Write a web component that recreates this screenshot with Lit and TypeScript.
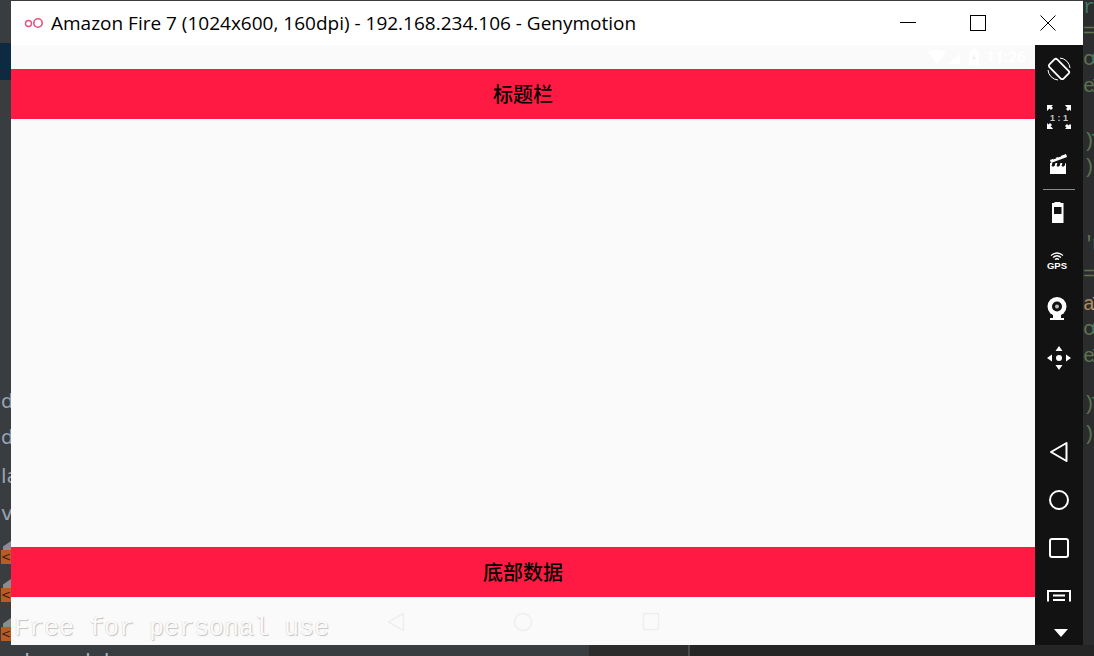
import { LitElement, html, css, svg } from "lit";
import { customElement } from "lit/decorators.js";

const rightCode: [number, string, string, string?, string?][] = [
  [8, " ", "r"], [32, "=", "'"], [60, "c", "0"], [87, "e", "I"], [142, ")", "T"], [168, ")", "'"],
  [245, "'", "r"], [275, "=", "'"], [305, "a", "I", "#b08a5a", "#9aa8c8"], [330, "c", "0"], [357, "e", "I"], [405, ")", "T"], [435, ")", "'"],
];

@customElement("app-root")
export class AppRoot extends LitElement {
  static styles = css`
    :host {
      display: block;
      position: relative;
      width: 1094px;
      height: 656px;
      overflow: hidden;
      background: #3a3d3f;
      font-family: "Liberation Sans", "Noto Sans CJK SC", sans-serif;
    }
    .navy { position: absolute; left: 0; top: 43px; width: 11px; height: 37px; background: #0d2a40; }
    .ide-letter { position: absolute; left: 1px; font: 20px/24px "DejaVu Sans", sans-serif; color: #a9b7c6; opacity: .85; }
    .marker { position: absolute; left: 1px; width: 10px; height: 14px; background: #b85c24; color: #3a2010; font: 12px/14px "DejaVu Sans", sans-serif; }
    .marker-top { position: absolute; left: 3px; width: 8px; height: 9px; background: #8a8d8f; clip-path: polygon(100% 0, 100% 100%, 0 100%, 0 60%); }
    .right-bg { position: absolute; left: 1083px; top: 0; width: 11px; height: 645px; background: #2b2c2d; overflow: hidden; }
    .code { position: absolute; left: 0; font: 20px/24px "Liberation Mono", monospace; letter-spacing: -4px; color: #5f7350; white-space: nowrap; }
    .code b { font-weight: 400; color: #3f7565; }
    .bottom-mid { position: absolute; left: 589px; top: 645px; width: 99px; height: 11px; background: #2c2c2c; }
    .bottom-right { position: absolute; left: 690px; top: 645px; width: 404px; height: 11px; background: #252525; }
    .bottom-rule { position: absolute; left: 688px; top: 645px; width: 2px; height: 11px; background: #4a4a4a; }
    .bottom-text { position: absolute; left: 11px; top: 650px; font: 21px/24px "DejaVu Sans", sans-serif; color: #a9b7c6; white-space: nowrap; }

    .window {
      position: absolute;
      left: 11px;
      top: 1px;
      width: 1072px;
      height: 644px;
      display: flex;
      flex-direction: column;
      background: #fff;
    }
    .titlebar { height: 44px; display: flex; align-items: center; flex: none; background: #fff; }
    .logo { width: 20px; height: 12px; margin-left: 13px; margin-right: 7px; flex: none; }
    .title { flex: 1; font: 19px/24px "Open Sans", "Liberation Sans", sans-serif; color: #000; white-space: nowrap; }
    .winbtn { width: 70px; height: 44px; display: flex; align-items: center; justify-content: center; flex: none; }
    .winbtn svg { display: block; }
    .body { flex: 1; display: flex; min-height: 0; }
    .device { width: 1024px; display: flex; flex-direction: column; background: #fafafa; position: relative; }
    .status { height: 24px; flex: none; display: flex; align-items: center; justify-content: flex-end; padding-right: 9px; gap: 5px; }
    .clock { font: 700 15.500px/16px "Roboto", sans-serif; color: #ffffff; }
    .bar {
      height: 50px;
      flex: none;
      background: #ff1a43;
      color: #000;
      display: flex;
      align-items: center;
      justify-content: center;
      font: 500 20px/24px "Noto Sans CJK SC", sans-serif;
    }
    .content { flex: 1; }
    .nav { height: 48px; flex: none; position: relative; }
    .navicon { position: absolute; }
    .watermark {
      position: absolute;
      left: 3px;
      top: 16px;
      font: 25px/32px "Liberation Mono", monospace;
      color: #fafafa;
      white-space: nowrap;
      text-shadow: 1px 1px 1px #c4c4c4, -0.5px 0 0 #dcdcdc;
    }
    .side { width: 48px; background: #121212; position: relative; flex: none; }
    .side svg { position: absolute; display: block; }
    .sep { position: absolute; left: 8px; top: 144px; width: 32px; height: 1px; background: #8a8a8a; }
  `;

  private sideIcon(x: number, y: number, w: number, h: number, body: unknown) {
    // x, y are page coordinates of the icon box
    return html`<svg style="left:${x - 1035}px;top:${y - 45}px" width=${w} height=${h} viewBox="0 0 ${w} ${h}">${body}</svg>`;
  }

  render() {
    return html`
      <div class="navy"></div>
      <span class="ide-letter" style="top:389px">d</span>
      <span class="ide-letter" style="top:425px">d</span>
      <span class="ide-letter" style="top:464px">la</span>
      <span class="ide-letter" style="top:501px">v</span>
      ${[537, 575, 614].map(
        (t) => html`<div class="marker-top" style="top:${t + 4}px"></div><div class="marker" style="top:${t + 13}px">&lt;</div>`
      )}
      <div class="right-bg">
        ${rightCode.map(
          ([y, a, b, ca, cb]) => html`<span class="code" style="top:${y - 12}px;${ca ? `color:${ca}` : ""}">${a}<b style=${cb ? `color:${cb}` : ""}>${b}</b></span>`
        )}
      </div>
      <div class="bottom-mid"></div>
      <div class="bottom-right"></div>
      <div class="bottom-rule"></div>
      <div class="bottom-text">ub model</div>

      <div class="window">
        <div class="titlebar">
          <svg class="logo" viewBox="0 0 20 12">
            <circle cx="4.500" cy="6.500" r="3" fill="none" stroke="#e8507f" stroke-width="1.400"></circle>
            <circle cx="14" cy="6" r="4.200" fill="none" stroke="#e8507f" stroke-width="1.600"></circle>
          </svg>
          <div class="title">Amazon Fire 7 (1024x600, 160dpi) - 192.168.234.106 - Genymotion</div>
          <div class="winbtn"><svg width="16" height="2"><rect width="16" height="1" y="0" fill="#000"></rect></svg></div>
          <div class="winbtn"><svg width="16" height="16"><rect x=".5" y=".5" width="15" height="15" fill="none" stroke="#000"></rect></svg></div>
          <div class="winbtn"><svg width="16" height="16"><path d="M.5.5l15 15M15.500.5l-15 15" stroke="#000" fill="none"></path></svg></div>
        </div>
        <div class="body">
          <div class="device">
            <div class="status">
              <svg width="53" height="16" viewBox="0 0 53 16">
                <path d="M0 3 Q9 -1.500 18 3 L9 15 Z" fill="#fff"></path>
                <path d="M20 15 L32 15 L32 5 Z" fill="#fff"></path>
                <path d="M41 2h3V0h4v2h3v14H41z" fill="#fff"></path>
                <path d="M47 4l-3 6h2l-1 4 3-6h-2z" fill="#f0f0f0"></path>
              </svg>
              <span class="clock">11:26</span>
            </div>
            <div class="bar">标题栏</div>
            <div class="content"></div>
            <div class="bar">底部数据</div>
            <div class="nav">
              <svg class="navicon" style="left:376px;top:15px" width="18" height="20" viewBox="0 0 18 20"><path d="M16.500 1.500 L1.500 10 L16.500 18.500 Z" fill="none" stroke="#eeeeee" stroke-width="1.500" stroke-linejoin="round"></path></svg>
              <svg class="navicon" style="left:502px;top:15px" width="20" height="20" viewBox="0 0 20 20"><circle cx="10" cy="10" r="8.500" fill="none" stroke="#eeeeee" stroke-width="1.500"></circle></svg>
              <svg class="navicon" style="left:631px;top:15px" width="18" height="20" viewBox="0 0 18 20"><rect x="1.500" y="1.500" width="15" height="16" rx="1" fill="none" stroke="#eeeeee" stroke-width="1.500"></rect></svg>
              <div class="watermark">Free for personal use</div>
            </div>
          </div>
          <div class="side">
            ${this.sideIcon(1047, 57, 24, 24, svg`
              <g transform="rotate(-45 12 12)" fill="none" stroke="#fff">
                <rect x="6.500" y="2" width="11" height="20" rx="2" stroke-width="1.800"></rect>
              </g>
              <path d="M13 1 A11 11 0 0 1 23 11" fill="none" stroke="#fff" stroke-width="1"></path>
              <path d="M11 23 A11 11 0 0 1 1 13" fill="none" stroke="#fff" stroke-width="1"></path>
            `)}
            ${this.sideIcon(1047, 105, 24, 24, svg`
              <path d="M0 0h6l-1.500 1.500 1.500 1.500-2 2-1.500-1.500L1.500 4.500 0 6zM24 0v6l-1.500-1.500-1.500 1.500-2-2 1.500-1.500L19 1.500 18 0zM0 24v-6l1.500 1.500 1.500-1.500 2 2-1.500 1.500L5 22.500 6 24zM24 24h-6l1.500-1.500-1.500-1.500 2-2 1.500 1.500 1.500-1.500 1 1z" fill="#fff"></path>
              <text x="12" y="15.500" text-anchor="middle" font-family="Liberation Sans" font-size="9" font-weight="700" fill="#c8c8c8">1 : 1</text>
            `)}
            ${this.sideIcon(1049, 153, 20, 24, svg`
              <path d="M1 10h16v11H1z" fill="#fff"></path>
              <path d="M1 7 L17 1 L18 4 L2 10 Z" fill="#fff"></path>
              <path d="M4 6l3-1M9 4l3-1M4 10h2l-1 3H3zM9 10h2l-1 3H8zM14 10h2l-1 3h-2z" stroke="#121212" fill="#121212" stroke-width="1"></path>
            `)}
            <div class="sep"></div>
            ${this.sideIcon(1051, 201, 14, 24, svg`
              <path d="M3 2 L4 1 H9 L10 2 H12.500 V22 H1 V2 Z" fill="#fff"></path>
              <rect x="3" y="6" width="7.500" height="7" fill="#121212"></rect>
            `)}
            ${this.sideIcon(1045, 250, 24, 24, svg`
              <path d="M6 5.500 Q12 0.500 18 5.500M8 7.500 Q12 4 16 7.500M10 9.500 Q12 8 14 9.500" fill="none" stroke="#fff" stroke-width="1.300"></path>
              <text x="12" y="19" text-anchor="middle" font-family="Liberation Sans" font-size="9.500" font-weight="700" fill="#fff">GPS</text>
            `)}
            ${this.sideIcon(1045, 297, 24, 24, svg`
              <circle cx="12" cy="9.500" r="9.500" fill="#fff"></circle>
              <circle cx="12" cy="9.500" r="5" fill="#121212"></circle>
              <circle cx="12" cy="9.500" r="2" fill="#bbb"></circle>
              <path d="M8 18h8v3h3v2H5v-2h3z" fill="#fff"></path>
            `)}
            ${this.sideIcon(1047, 345, 24, 26, svg`
              <path d="M12 1l3.500 5h-7zM12 25l-3.500-5h7zM0 13l5-3.500v7zM24 13l-5 3.500v-7z" fill="#fff"></path>
              <circle cx="12" cy="13" r="3" fill="#fff"></circle>
            `)}
            ${this.sideIcon(1049, 441, 20, 22, svg`
              <path d="M17.500 2 L2 11 L17.500 20 Z" fill="none" stroke="#fff" stroke-width="2" stroke-linejoin="round"></path>
            `)}
            ${this.sideIcon(1048, 489, 22, 22, svg`
              <circle cx="11" cy="11" r="9" fill="none" stroke="#fff" stroke-width="2"></circle>
            `)}
            ${this.sideIcon(1049, 538, 20, 20, svg`
              <rect x="1" y="1" width="18" height="18" rx="2" fill="none" stroke="#fff" stroke-width="2"></rect>
            `)}
            ${this.sideIcon(1047, 590, 24, 12, svg`
              <path d="M1 11.500V1h22v10.500" fill="none" stroke="#fff" stroke-width="2"></path>
              <path d="M6 5.500h12M6 10h12" stroke="#fff" stroke-width="2"></path>
            `)}
            ${this.sideIcon(1053, 628, 16, 10, svg`
              <path d="M1 1h14l-7 8z" fill="#fff"></path>
            `)}
          </div>
        </div>
      </div>
    `;
  }
}
